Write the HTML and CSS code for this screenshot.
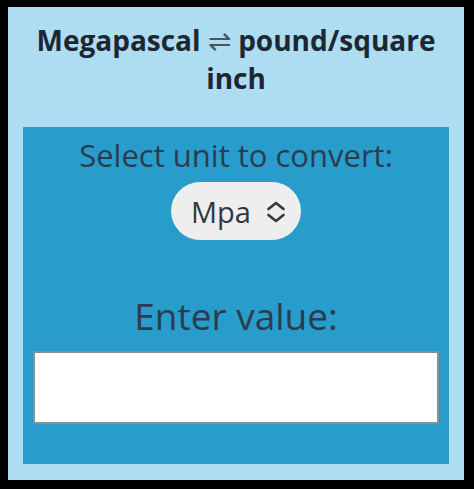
FILE: index.html
```html
<!DOCTYPE html>
<html lang="en">
<head>
  <meta charset="UTF-8" />
  <meta name="viewport" content="width=device-width, initial-scale=1.0" />
  <title>Megapascal to pound/square inch</title>
  <link rel="stylesheet" href="styles.css">
</head>
<body>
  <div class="converter">
    <h1 class="title">Megapascal <span class="swap">&#8652;</span> pound/square inch</h1>
    <div class="panel">
      <label class="label-unit" for="unit">Select unit to convert:</label>
      <div class="unit-select" id="unit">
        <span>Mpa</span>
        <svg width="20" height="22" viewBox="0 0 20 22" fill="none" stroke="#33383e" stroke-width="2.6" stroke-linecap="round" stroke-linejoin="round">
          <path d="M2.5 8 L10 2 L17.5 8" />
          <path d="M2.5 14 L10 20 L17.5 14" />
        </svg>
      </div>
      <label class="label-value" for="value">Enter value:</label>
      <input class="value-input" id="value" type="text" />
    </div>
  </div>
</body>
</html>
```
FILE: styles.css
```css
* { box-sizing: border-box; margin: 0; padding: 0; }
html { background: #000; }
body { background: #000; font-family: 'Open Sans', sans-serif; padding: 7px 10px 9px 8px; height: 489px; }
.converter { background: #aedcf0; height: 473px; padding: 15px 15px 16px; display: flex; flex-direction: column; }
.title { font-size: 28px; line-height: 36px; font-weight: 700; color: #1d2733; text-align: center; margin-bottom: 31px; }
.swap { font-family: 'DejaVu Sans', sans-serif; font-weight: 200; color: #4a5563; }
.panel { background: #289dcc; flex: 1; display: flex; flex-direction: column; align-items: center; padding: 8px 10px 0; }
.label-unit { font-size: 31px; line-height: 40px; color: #2b3c50; }
.unit-select { margin-top: 7px; height: 58px; padding: 0 15px 0 20px; border-radius: 29px; background: #eeeeee; display: flex; align-items: center; gap: 15px; font-size: 29px; color: #33383e; }
.unit-select svg { margin-top: 1px; }
.label-value { margin-top: 52px; font-size: 37px; line-height: 48px; color: #2b3c50; }
.value-input { margin-top: 11px; width: 100%; height: 73px; border: 2px solid #8a8f94; background: #fff; font-size: 24px; font-family: 'Open Sans', sans-serif; }
```
